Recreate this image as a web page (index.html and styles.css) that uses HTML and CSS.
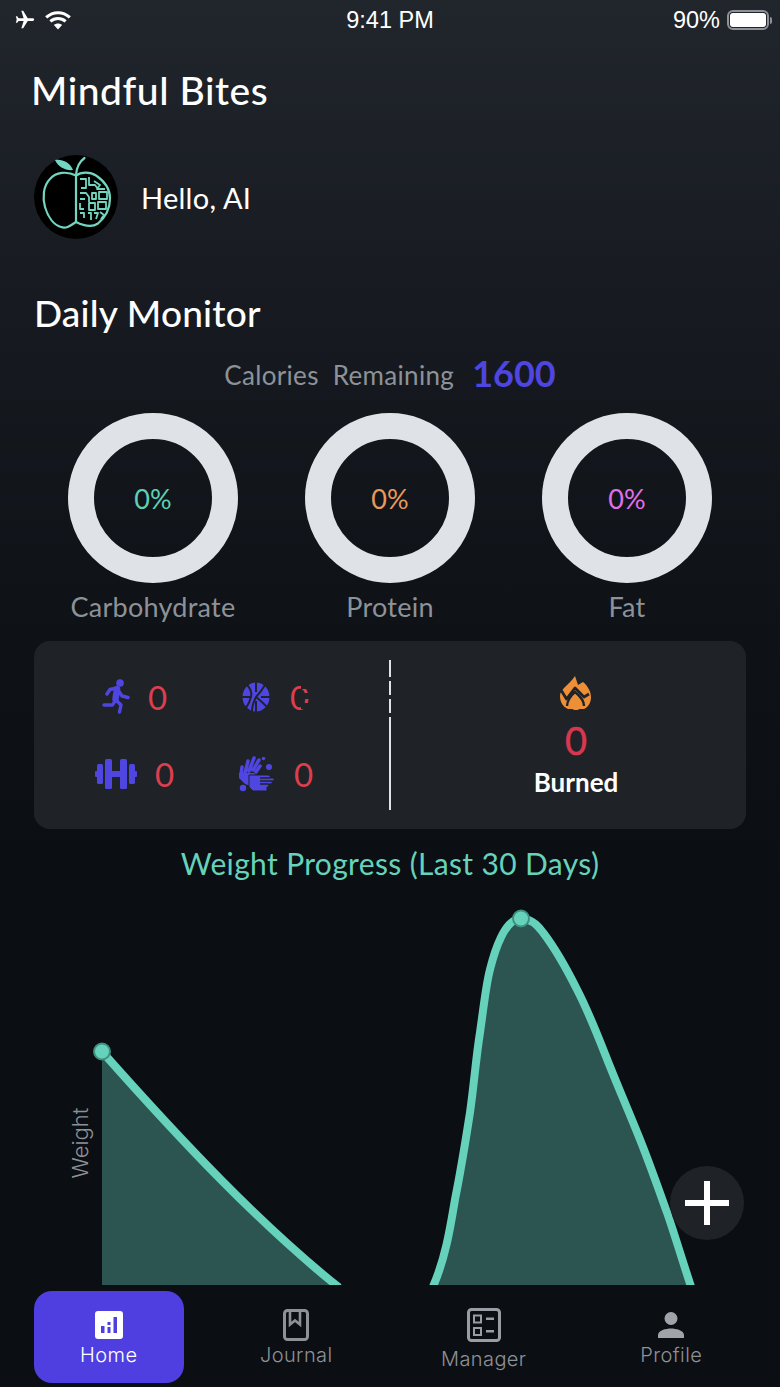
FILE: index.html
```html
<!DOCTYPE html>
<html lang="en">
<head>
<meta charset="utf-8">
<title>Mindful Bites</title>
<link rel="stylesheet" href="styles.css">
</head>
<body>
<div class="app">
  <div class="status">
    <div class="status-left">
      <svg class="ic-plane" viewBox="0 0 24 24"><path fill="#fff" transform="rotate(90 12 12)" d="M21 16v-2l-8-5V3.5c0-.83-.67-1.5-1.5-1.5S10 2.67 10 3.5V9l-8 5v2l8-2.5V19l-2 1.5V22l3.5-1 3.5 1v-1.5L13 19v-5.5l8 2.5z"/></svg>
      <svg class="ic-wifi" viewBox="0 0 30 22"><g fill="none" stroke="#fff" stroke-width="3.4"><path d="M2 8.2C9.5 1.3 20.5 1.3 28 8.2"/><path d="M6.6 12.6C11.5 8.3 18.5 8.3 23.4 12.6"/></g><path fill="#fff" d="M10.5 16.4c2.6-2.2 6.4-2.2 9 0L15 21.5z"/></svg>
    </div>
    <div class="status-time">9:41 PM</div>
    <div class="status-right">
      <span class="batt-pct">90%</span>
      <span class="batt"><span class="batt-fill"></span></span>
      <span class="batt-nub"></span>
    </div>
  </div>

  <h1 class="brand">Mindful Bites</h1>

  <div class="greet">
    <svg class="avatar" viewBox="0 0 84 84">
      <circle cx="42" cy="42" r="42" fill="#000"/>
      <path d="M21 5c6-1.500 15 2 18 10-7 1-15-3-18-10z" fill="#72d6c0"/>
      <g fill="none" stroke="#72d6c0" stroke-width="2.200" stroke-linecap="round" stroke-linejoin="round">
        <path d="M42 20c.5-7 3-13 8.500-17"/>
        <path d="M42 20.500C33 16 22 17 16 24 9 31 8.500 43 11 52c3 10 9 18 16 20 6 2 10-2 15-5"/>
        <path d="M42 20.500V67"/>
        <path d="M42 20.500c5-3.500 14-4 20 0 9 6 14 14 14 23 0 10-5 19-12 25-6 4-13 3-22-1.500"/>
      </g>
      <g fill="none" stroke="#72d6c0" stroke-width="1.800" stroke-linejoin="round">
        <path d="M46 24h6v9h-5M55 22v8h6l3 4M60 26l6 4-3 4h8"/>
        <path d="M46 38h6l3 4v5M58 38h4v6h-4zM65 37h8v7h-8z"/>
        <path d="M46 44h5M46 48v6h4M55 48h6v7h-6zM64 47h8v7h-8z"/>
        <path d="M46 58h4v5M54 58h3v7M60 58h4l-2 6M66 57l4 3-3 4"/>
      </g>
    </svg>
    <span class="hello">Hello, AI</span>
  </div>

  <h2 class="section">Daily Monitor</h2>

  <div class="cal">
    <span class="cal-label">Calories&nbsp; Remaining</span>
    <span class="cal-num">1600</span>
  </div>

  <div class="rings">
    <div class="macro">
      <div class="ring"><span class="pct pct-carb">0%</span></div>
      <div class="macro-name">Carbohydrate</div>
    </div>
    <div class="macro">
      <div class="ring"><span class="pct pct-prot">0%</span></div>
      <div class="macro-name">Protein</div>
    </div>
    <div class="macro">
      <div class="ring"><span class="pct pct-fat">0%</span></div>
      <div class="macro-name">Fat</div>
    </div>
  </div>

  <div class="card">
    <div class="stats">
      <div class="stat">
        <svg class="ic-run" viewBox="0 0 28 35">
          <circle cx="18" cy="4" r="3.800" fill="#4f45e0"/>
          <g fill="none" stroke="#4f45e0" stroke-linecap="round" stroke-linejoin="round">
            <path stroke-width="6.500" d="M15 10l-1.500 10"/>
            <path stroke-width="3.400" d="M15 9L8 10.500 5 15M16 11l4 6 6 1.500M13.500 21l-3 5H2M14 21l5 5-1.500 7"/>
          </g>
        </svg>
        <span class="count">0</span>
      </div>
      <div class="stat stat-wide">
        <svg class="ic-ball" viewBox="0 0 28 30">
          <ellipse cx="14" cy="15" rx="13.500" ry="14.500" fill="#4f45e0"/>
          <g fill="none" stroke="#1f2328" stroke-width="2">
            <path d="M14 0v10M14 19v11M0 15h9M19 15h9"/>
            <path d="M5 3c4 4 5 8 4 12-1 4-3 8-5 11"/>
            <path d="M23 3c-3 5-6 9-9 12-2 4-4 9-4 14"/>
            <path d="M14 15c4 3 8 7 11 10"/>
          </g>
        </svg>
        <span class="count count-glitch">0</span>
      </div>
      <div class="stat">
        <svg class="ic-bell" viewBox="0 0 42 30">
          <g fill="#4f45e0">
            <rect x="0" y="12" width="3" height="6" rx="1"/>
            <rect x="2" y="5" width="6" height="20" rx="1.500"/>
            <rect x="10" y="0" width="7" height="30" rx="1.500"/>
            <rect x="16" y="12" width="10" height="6"/>
            <rect x="25" y="0" width="7" height="30" rx="1.500"/>
            <rect x="34" y="5" width="6" height="20" rx="1.500"/>
            <rect x="39" y="12" width="3" height="6" rx="1"/>
          </g>
        </svg>
        <span class="count">0</span>
      </div>
      <div class="stat stat-wide">
        <svg class="ic-hands" viewBox="0 0 36 36">
          <g fill="none" stroke="#4f45e0" stroke-linecap="round">
            <path stroke-width="3.500" d="M3 19l1-8M7 17l3-12M11 15l5-13M15 14l6-10M18 16l4-6"/>
          </g>
          <path fill="#4f45e0" d="M1 17h15l5 6v6l-6 2-8-3-6-6z"/>
          <path fill="#4f45e0" stroke="#1f2328" stroke-width="1" d="M11 19l9 0 10 0c3 0 3 3 0 3h-8 12c3 0 3 3 0 3H22h10c3 0 3 3 0 3H22h7c2.500 0 2.500 3 0 3v4H15l-4-4z"/>
          <circle cx="31" cy="11" r="3" fill="#4f45e0"/>
          <circle cx="25.500" cy="2.500" r="1.800" fill="#4f45e0"/>
          <circle cx="5" cy="32" r="3.200" fill="#4f45e0"/>
        </svg>
        <span class="count">0</span>
      </div>
    </div>
    <div class="divider"></div>
    <div class="burned">
      <svg class="ic-flame" viewBox="0 0 32 35">
        <path fill="#ec8f36" d="M15 0l3 9 5-3c5 4 8 10 8 15 0 6-3 10-7 12H8c-5-2-8-7-8-13C0 13 9 9 15 0z"/>
        <path fill="none" stroke="#1f2328" stroke-width="2.800" stroke-linejoin="round" d="M1 14l5.500 9L15 12l9 9 5-3"/>
        <path fill="none" stroke="#1f2328" stroke-width="2.400" d="M7 30c0-4 3-10 8-14 5 4 9 9 9 14"/>
        <path fill="#ec8f36" d="M16 20c2 2 6 5 6 9 0 3-3 5-6 5s-6-2-6-5c0-4 4-7 6-9z"/>
      </svg>
      <span class="burn-num">0</span>
      <span class="burn-label">Burned</span>
    </div>
  </div>

  <div class="chart-title">Weight Progress (Last 30 Days)</div>

  <div class="chart">
    <svg class="chart-svg" viewBox="0 882 780 403">
      <path class="area" d="M102 1052C180 1140 260 1225 339 1288H102z"/>
      <path class="area" d="M433 1287C445 1260 450 1230 455 1200C462 1165 465 1145 470 1113C474 1085 476 1058 480 1033C484 1005 486 985 490 970C495 950 505 919 521 919C530 919 538 926 543 933C556 950 566 968 577 990C590 1015 600 1042 610 1067C620 1092 630 1115 640 1140C650 1165 658 1188 667 1213C675 1236 682 1260 691 1287z"/>
      <path class="line" d="M102 1052C180 1140 260 1225 339 1288"/>
      <path class="line" d="M433 1287C445 1260 450 1230 455 1200C462 1165 465 1145 470 1113C474 1085 476 1058 480 1033C484 1005 486 985 490 970C495 950 505 919 521 919C530 919 538 926 543 933C556 950 566 968 577 990C590 1015 600 1042 610 1067C620 1092 630 1115 640 1140C650 1165 658 1188 667 1213C675 1236 682 1260 691 1287"/>
      <circle class="dot" cx="102" cy="1052" r="8"/>
      <circle class="dot" cx="521" cy="919" r="8"/>
      <text class="axis" transform="translate(88 1179) rotate(-90)">Weight</text>
    </svg>
    <button class="fab" type="button" aria-label="Add"><span class="plus"></span></button>
  </div>

  <nav class="tabs">
    <div class="tab tab-active">
      <svg class="ic-tab" viewBox="0 0 28 28"><rect width="28" height="28" rx="3" fill="#fff"/><g fill="#4f3fe0"><rect x="6" y="15" width="3.500" height="7"/><rect x="12.500" y="11" width="3" height="3"/><rect x="12.500" y="16" width="3" height="6"/><rect x="18.500" y="6" width="3.500" height="16"/></g></svg>
      <span class="tab-label">Home</span>
    </div>
    <div class="tab tab-journal">
      <svg class="ic-journal" viewBox="0 0 26 32"><rect x="1.500" y="1.500" width="23" height="29" rx="3" fill="none" stroke="#8e9298" stroke-width="3"/><path d="M7 1.500h10v14l-5-4-5 4z" fill="none" stroke="#8e9298" stroke-width="2.600"/></svg>
      <span class="tab-label">Journal</span>
    </div>
    <div class="tab tab-low">
      <svg class="ic-manager" viewBox="0 0 34 34"><rect x="1.500" y="1.500" width="31" height="31" rx="3" fill="none" stroke="#9a9ea4" stroke-width="3"/><g fill="none" stroke="#9a9ea4" stroke-width="2"><rect x="7" y="7.500" width="7" height="7"/><rect x="7" y="20" width="7" height="7"/></g><g fill="#9a9ea4"><rect x="19" y="9.500" width="8" height="2.500"/><rect x="19" y="22" width="8" height="2.500"/></g></svg>
      <span class="tab-label">Manager</span>
    </div>
    <div class="tab tab-profile">
      <svg class="ic-profile" viewBox="0 0 26 26"><circle cx="13" cy="6.500" r="6.500" fill="#a0a4aa"/><path fill="#a0a4aa" d="M0 26v-3c0-4.500 8-6.500 13-6.500s13 2 13 6.500v3z"/></svg>
      <span class="tab-label">Profile</span>
    </div>
  </nav>
</div>
</body>
</html>
```

FILE: styles.css
```css
* { box-sizing: border-box; }
html, body { margin: 0; padding: 0; }
body { background: #0b0e12; font-family: "Lato", "Liberation Sans", sans-serif; }
.app {
  width: 780px;
  height: 1387px;
  overflow: hidden;
  background: linear-gradient(#21262c 0, #171b21 300px, #0f1318 600px, #0b0e12 880px);
  display: flex;
  flex-direction: column;
}
.status {
  height: 40px;
  display: grid;
  grid-template-columns: 1fr auto 1fr;
  align-items: center;
  color: #fff;
  font-family: "Liberation Sans", sans-serif;
}
.status-left { display: flex; align-items: center; padding-left: 14px; gap: 8px; }
.ic-plane { width: 22px; height: 22px; }
.ic-wifi { width: 28px; height: 20px; }
.status-time { font-size: 23.500px; }
.status-right { display: flex; align-items: center; justify-content: flex-end; padding-right: 8px; }
.batt-pct { font-size: 23.500px; margin-right: 7px; }
.batt {
  width: 42px;
  height: 20px;
  border: 2px solid #8f9398;
  border-radius: 6px;
  padding: 1px;
  display: flex;
}
.batt-fill { flex: 1; background: #fff; border-radius: 3px; }
.batt-nub { width: 2px; height: 7px; background: #8f9398; margin-left: 1px; border-radius: 0 2px 2px 0; }

.brand {
  margin: 28px 0 0 31px;
  font-size: 39px;
  line-height: 44px;
  font-weight: 500;
  color: #fff;
  letter-spacing: .55px;
}
.greet { display: flex; align-items: center; margin: 43px 0 0 34px; gap: 23px; }
.avatar { width: 84px; height: 84px; display: block; }
.hello { font-size: 29px; color: #fff; letter-spacing: .25px; }
.section {
  margin: 52px 0 0 34px;
  font-size: 37px;
  line-height: 44px;
  font-weight: 500;
  color: #fff;
  letter-spacing: .2px;
}
.cal {
  margin-top: 18px;
  height: 44px;
  display: flex;
  align-items: center;
  justify-content: center;
  gap: 18px;
}
.cal-label { font-size: 26px; color: #8d9299; letter-spacing: .33px; }
.cal-num { font-size: 36px; font-weight: 700; color: #4f45e0; padding-bottom: 4px; }
.rings {
  margin-top: 16px;
  display: grid;
  grid-template-columns: repeat(3, 237px);
  justify-content: center;
}
.macro { display: flex; flex-direction: column; align-items: center; }
.ring {
  width: 170px;
  height: 170px;
  border: 26px solid #dfe3e8;
  border-radius: 50%;
  display: flex;
  align-items: center;
  justify-content: center;
}
.pct { font-size: 27px; }
.pct-carb { color: #5fd0b5; }
.pct-prot { color: #e8995a; }
.pct-fat { color: #e070e8; }
.macro-name { margin-top: 9px; font-size: 27px; line-height: 30px; color: #8d9299; letter-spacing: .25px; }

.card {
  margin: 19px 34px 0;
  height: 188px;
  background: #1f2328;
  border-radius: 16px;
  display: flex;
  align-items: center;
}
.stats {
  width: 355px;
  padding-left: 30px;
  display: grid;
  grid-template-columns: 141px 141px;
  grid-auto-rows: 77px;
}
.stat { display: flex; align-items: center; justify-content: center; gap: 18px; }
.stat-wide { gap: 20px; }
.count { font-size: 33px; color: #dc3f4e; position: relative; }
.count-glitch::after {
  content: "";
  position: absolute;
  top: 6px;
  bottom: 6px;
  right: 0;
  width: 8px;
  background: repeating-linear-gradient(#1f2328 0 6px, transparent 6px 10px);
}
.ic-run { width: 28px; height: 35px; }
.ic-ball { width: 28px; height: 30px; }
.ic-bell { width: 42px; height: 30px; }
.ic-hands { width: 36px; height: 36px; }
.divider {
  width: 2px;
  height: 150px;
  background: linear-gradient(#dfe3e8 0 17px, transparent 17px 21px, #dfe3e8 21px 35px, transparent 35px 39px, #dfe3e8 39px 53px, transparent 53px 57px, #dfe3e8 57px);
}
.burned {
  flex: 1;
  padding: 3px 0 0 15px;
  display: flex;
  flex-direction: column;
  align-items: center;
}
.ic-flame { width: 32px; height: 35px; }
.burn-num { font-size: 38px; line-height: 44px; margin-top: 7px; color: #d8384f; -webkit-text-stroke: .5px #d8384f; }
.burn-label { font-size: 26px; line-height: 32px; font-weight: 700; color: #fff; margin-top: 4px; }

.chart-title {
  margin-top: 16px;
  font-size: 30px;
  line-height: 36px;
  letter-spacing: .35px;
  color: #66d2bb;
  text-align: center;
}
.chart { position: relative; height: 404px; }
.chart-svg { display: block; width: 780px; height: 404px; }
.area { fill: #2c5451; }
.line { fill: none; stroke: #66d2bb; stroke-width: 8; }
.dot { fill: #66d2bb; stroke: #3f8f80; stroke-width: 2; }
.axis { font-family: "Inter", "Liberation Sans", sans-serif; font-size: 22px; font-weight: 300; fill: #8d9299; }
.fab {
  position: absolute;
  right: 36px;
  bottom: 45px;
  width: 74px;
  height: 74px;
  border: 0;
  padding: 0;
  border-radius: 50%;
  background: #1f2328;
  display: flex;
  align-items: center;
  justify-content: center;
}
.plus {
  display: block;
  width: 44px;
  height: 44px;
  background: linear-gradient(#fff, #fff) center / 44px 6px no-repeat, linear-gradient(#fff, #fff) center / 6px 44px no-repeat;
}
.tabs {
  flex: 1;
  display: grid;
  grid-template-columns: repeat(4, 187.500px);
  padding: 6px 0 4px 15px;
  font-family: "Inter", "Liberation Sans", sans-serif;
}
.tab {
  justify-self: center;
  width: 150px;
  display: flex;
  flex-direction: column;
  align-items: center;
  color: #8e9298;
}
.tab-active { background: #4f3fe0; border-radius: 18px; color: #fff; padding-top: 20px; }
.tab-label { font-size: 20px; line-height: 26px; font-weight: 300; letter-spacing: .4px; margin-top: 3px; }
.ic-tab { width: 28px; height: 28px; }
.ic-journal { width: 26px; height: 32px; margin-top: 18px; }
.tab-journal .tab-label { margin-top: 1px; }
.ic-manager { width: 34px; height: 34px; margin-top: 17px; }
.tab-low .tab-label { margin-top: 4px; }
.ic-profile { width: 26px; height: 26px; margin-top: 21px; }
.tab-profile .tab-label { margin-top: 4px; }
```
